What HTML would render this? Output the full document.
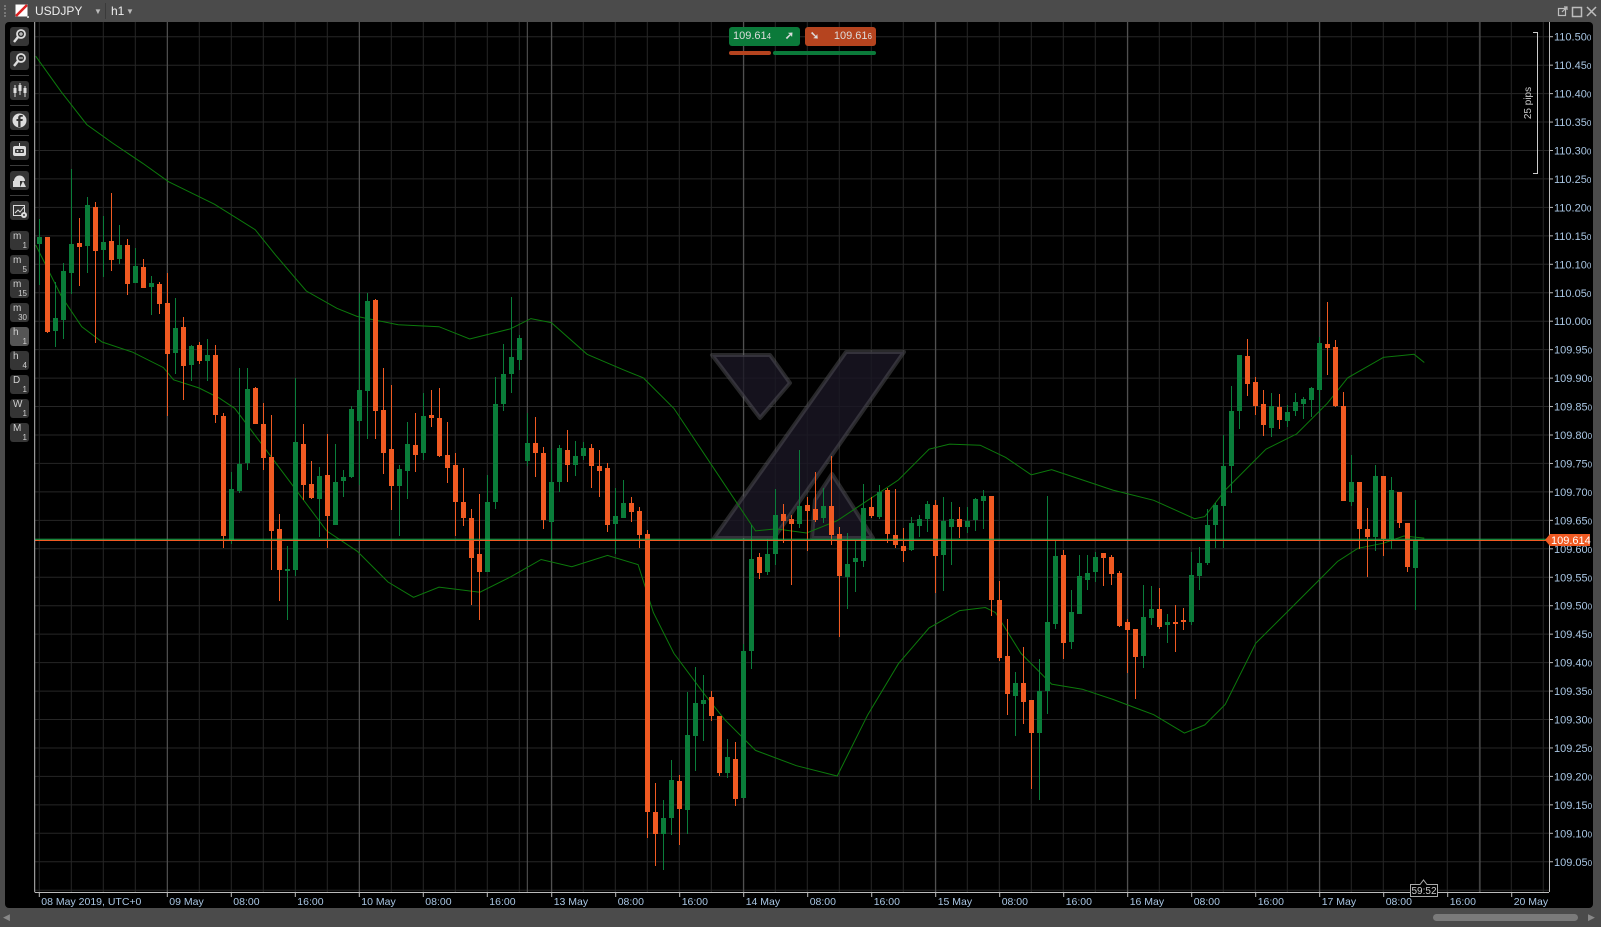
<!DOCTYPE html>
<html><head><meta charset="utf-8">
<style>
html,body{margin:0;padding:0;}
body{width:1601px;height:927px;background:#4b4b4b;position:relative;overflow:hidden;font-family:"Liberation Sans",sans-serif;}
#panel{position:absolute;left:5px;top:22px;width:1588px;height:886px;background:#000;border-radius:4px 4px 4px 4px;}
.btn{position:absolute;left:10px;width:19px;height:19px;background:#353535;border-radius:3px;color:#cfcfcf;}
.sep{position:absolute;left:10px;width:19px;height:1px;background:#3c3c3c;}
.tf .a{position:absolute;left:3px;top:0px;font-size:10px;}
.tf .b{position:absolute;right:2px;bottom:0px;font-size:8px;}
.ttl{position:absolute;color:#eee;font-size:12px;top:4px;}
</style></head><body>
<div style="position:absolute;left:4px;top:5px;width:2px;height:12px;border-left:2px dotted #777;"></div>
<svg style="position:absolute;left:15px;top:4px" width="14" height="14"><rect x="0.5" y="0.5" width="12" height="12" fill="#fff"/><line x1="1" y1="12" x2="12" y2="1" stroke="#d22" stroke-width="2.5"/><rect x="12" y="12" width="2" height="2" fill="#ccc"/></svg>
<div class="ttl" style="left:35px;">USDJPY</div>
<div class="ttl" style="left:94px;font-size:8px;top:7px;color:#bbb">▼</div>
<div style="position:absolute;left:105px;top:3px;width:1px;height:16px;background:#3a3a3a"></div>
<div class="ttl" style="left:111px;">h1</div>
<div class="ttl" style="left:126px;font-size:8px;top:7px;color:#bbb">▼</div>
<svg style="position:absolute;left:1557px;top:5px" width="44" height="14">
<g stroke="#bdbdbd" fill="none" stroke-width="1.2"><rect x="1.5" y="3.5" width="7" height="7"/><path d="M5 7 L10 2 M7 2 H10 V5"/><rect x="15.5" y="2.5" width="9" height="9" stroke-width="1.5"/><path d="M30 2 L39 11 M39 2 L30 11" stroke-width="1.5"/></g></svg>
<div id="panel"></div>
<div class="btn" style="top:27px"><svg width="19" height="19"><circle cx="11" cy="7" r="4" fill="none" stroke="#ddd" stroke-width="1.8"/><path d="M8 10 L4 15" stroke="#ddd" stroke-width="2.4"/><path d="M9 7h4M11 5v4" stroke="#ddd" stroke-width="1"/></svg></div>
<div class="btn" style="top:51px"><svg width="19" height="19"><circle cx="11" cy="7" r="4" fill="none" stroke="#ddd" stroke-width="1.8"/><path d="M8 10 L4 15" stroke="#ddd" stroke-width="2.4"/><path d="M9 7h4" stroke="#ddd" stroke-width="1"/></svg></div>
<div class="sep" style="top:75px"></div>
<div class="btn" style="top:81px"><svg width="19" height="19"><g stroke="#ddd"><path d="M5 4v12M10 2v12M15 5v11"/></g><rect x="3.5" y="7" width="3" height="5" fill="#ddd"/><rect x="8.5" y="4" width="3" height="6" fill="#ddd"/><rect x="13.5" y="7" width="3" height="5" fill="#ddd"/></svg></div>
<div class="sep" style="top:105px"></div>
<div class="btn" style="top:111px"><svg width="19" height="19"><circle cx="9.5" cy="9.5" r="7" fill="#ddd"/><path d="M10.5 16V10h2l.3-2h-2.3V6.8c0-.6.2-1 1-1h1.3V4.1c-.3 0-1-.1-1.8-.1-1.8 0-2.8 1-2.8 2.8V8H6.5v2h1.7v6z" fill="#353535"/></svg></div>
<div class="sep" style="top:135px"></div>
<div class="btn" style="top:141px"><svg width="19" height="19"><rect x="3" y="5" width="13" height="10" rx="2" fill="#ddd"/><rect x="5" y="8" width="9" height="4" rx="1" fill="#353535"/><circle cx="7.5" cy="10" r="1" fill="#ddd"/><circle cx="11.5" cy="10" r="1" fill="#ddd"/><path d="M9.5 2v3" stroke="#ddd"/></svg></div>
<div class="sep" style="top:165px"></div>
<div class="btn" style="top:171px"><svg width="19" height="19"><path d="M4 10 a5.5 5.5 0 0 1 11 0z" fill="#ddd"/><rect x="3" y="10" width="7" height="6" fill="#ddd"/><path d="M10 16 L13 10 L16 16z" fill="#ddd"/></svg></div>
<div class="sep" style="top:195px"></div>
<div class="btn" style="top:201px"><svg width="19" height="19"><g stroke="#ddd" fill="none"><rect x="3.5" y="4.5" width="11" height="10"/><path d="M5 12 L8 9 L10 11 L14 6"/></g><circle cx="14" cy="14" r="3" fill="#ddd"/><circle cx="14" cy="14" r="1" fill="#353535"/></svg></div>
<div class="btn tf" style="top:231px"><span class="a">m</span><span class="b">1</span></div>
<div class="btn tf" style="top:255px"><span class="a">m</span><span class="b">5</span></div>
<div class="btn tf" style="top:279px"><span class="a">m</span><span class="b">15</span></div>
<div class="btn tf" style="top:303px"><span class="a">m</span><span class="b">30</span></div>
<div class="btn tf" style="top:327px;background:#555"><span class="a">h</span><span class="b">1</span></div>
<div class="btn tf" style="top:351px"><span class="a">h</span><span class="b">4</span></div>
<div class="btn tf" style="top:375px"><span class="a">D</span><span class="b">1</span></div>
<div class="btn tf" style="top:399px"><span class="a">W</span><span class="b">1</span></div>
<div class="btn tf" style="top:423px"><span class="a">M</span><span class="b">1</span></div>

<svg id="ch" style="position:absolute;left:0;top:0" width="1601" height="927" font-family="Liberation Sans, sans-serif"></svg>

<div style="position:absolute;left:1433px;top:914px;width:145px;height:7px;background:#7a7a7a;border-radius:4px"></div>
<div style="position:absolute;left:3px;top:912px;color:#888;font-size:9px">◀</div>
<div style="position:absolute;left:1588px;top:912px;color:#888;font-size:9px">▶</div>

<div style="position:absolute;left:729px;top:27px;width:71px;height:19px;background:#0b7a3a;border-radius:3px;color:#ddd;font-size:11px;line-height:19px"><span style="margin-left:4px">109.61</span><span style="font-size:8px">4</span><span style="position:absolute;right:6px;font-weight:bold">➚</span></div>
<div style="position:absolute;left:805px;top:27px;width:71px;height:19px;background:#b5441f;border-radius:3px;color:#ddd;font-size:11px;line-height:19px"><span style="position:absolute;left:5px;font-weight:bold">➘</span><span style="position:absolute;right:4px">109.61<span style="font-size:8px">6</span></span></div>
<div style="position:absolute;left:729px;top:51px;width:42px;height:4px;background:#b5441f;border-radius:2px"></div>
<div style="position:absolute;left:773px;top:51px;width:103px;height:4px;background:#0b7a3a;border-radius:2px"></div>

<script>
var S='';
function L(x1,y1,x2,y2,c,w){S+='<line x1="'+x1+'" y1="'+y1+'" x2="'+x2+'" y2="'+y2+'" stroke="'+c+'" stroke-width="'+(w||1)+'"/>';}
var prices=[];
for(var k=0;k<=30;k++){var y=36.7+28.45*k;if(y<891){L(35,y.toFixed(1),1549,y.toFixed(1),'#262626');if(y<870)prices.push([y,(110.5-0.05*k).toFixed(2)]);}}
for(var x=39.3;x<1549;x+=32){L(x.toFixed(1),22,x.toFixed(1),892,'#262626');}
var bright=[167.3,359.3,527.3,551.7,743.7,935.7,1127.7,1319.7,1480];
bright.forEach(function(x){L(x,22,x,892,'#5a5a5a');});
S+='<g fill="rgba(26,22,36,0.8)" stroke="rgba(100,100,105,0.4)" stroke-width="4" stroke-linejoin="round">'+
'<polygon points="712,355 770,355 790,383 760,418"/>'+
'<polygon points="846,352 904,352 774,538 714,538"/>'+
'<polygon points="832,474 873,538 812,538 815,500"/></g>';
function P(pts,c){S+='<polyline fill="none" stroke="'+c+'" stroke-width="1" points="'+pts.map(function(p){return (p[0]*1.021).toFixed(1)+','+(p[1]*1.021).toFixed(1)}).join(' ')+'"/>';}
P([[35,55],[60,90],[85,122],[110,140],[140,160],[165,178],[210,200],[250,225],[270,250],[300,285],[330,302],[350,310],[390,318],[430,320],[460,332],[500,322],[520,312],[540,316],[575,347],[610,362],[630,370],[660,400],[700,460],[740,520],[760,518],[790,522],[820,510],[850,490],[880,470],[910,440],[930,435],[960,436],[985,448],[1010,465],[1030,460],[1060,470],[1090,480],[1130,490],[1170,508],[1180,506],[1200,480],[1240,440],[1270,425],[1300,395],[1320,370],[1355,350],[1385,347],[1395,355]],'#0c7a0c');
P([[35,240],[60,290],[80,320],[100,335],[130,345],[160,360],[170,372],[195,380],[215,390],[230,400],[260,440],[290,480],[320,520],[350,540],[380,570],[405,585],[430,575],[470,580],[500,565],[530,548],[560,555],[595,544],[625,553],[640,600],[660,640],[690,680],[710,705],[740,735],[780,750],[820,760],[850,700],[880,650],[910,615],[940,598],[965,595],[975,600],[1000,640],[1030,670],[1060,675],[1090,685],[1130,700],[1160,718],[1180,710],[1200,690],[1230,630],[1260,600],[1290,570],[1310,550],[1330,537],[1355,532],[1375,525],[1395,527]],'#0c7a0c');
var C=[[39,'g',237,244,219,285],[47,'o',237,332,237,333],[55,'g',318,331,282,347],[63,'g',271,320,263,339],[71,'g',244,273,169,294],[79,'o',243,247,218,286],[87,'g',205,246,197,273],[95,'o',207,251,202,343],[103,'g',242,250,216,277],[111,'o',241,260,193,271],[119,'g',245,259,225,264],[127,'o',245,284,239,295],[135,'g',266,283,248,283],[143,'o',267,288,259,288],[151,'g',283,287,276,315],[159,'o',284,304,282,314],[167,'o',303,354,273,416],[175,'g',328,353,298,374],[183,'o',327,366,317,400],[191,'g',346,365,345,381],[199,'o',345,361,342,364],[207,'g',355,361,339,381],[215,'o',355,415,345,423],[223,'o',416,536,413,548],[231,'g',489,540,472,544],[239,'g',464,491,368,493],[247,'g',389,463,368,470],[255,'o',388,424,387,424],[263,'o',424,458,403,470],[271,'o',457,531,415,570],[279,'o',529,570,514,601],[287,'g',569,571,546,620],[295,'g',442,570,378,576],[303,'o',444,485,424,500],[311,'o',484,498,461,499],[319,'g',476,499,467,537],[327,'o',475,516,434,548],[335,'g',482,525,444,525],[343,'g',477,481,470,497],[351,'g',409,477,406,478],[359,'g',390,421,293,485],[367,'g',301,391,293,439],[375,'o',300,411,299,439],[383,'o',410,453,368,474],[391,'o',449,486,385,510],[399,'g',469,486,465,536],[407,'g',444,471,422,499],[415,'o',445,455,413,472],[423,'g',416,453,393,460],
[431,'o',415,418,390,427],[439,'o',418,456,388,457],[447,'o',455,468,422,483],[455,'o',465,502,453,536],[463,'o',502,518,468,526],[471,'o',518,558,509,605],[479,'o',554,572,494,620],[487,'g',502,572,475,572],[495,'g',404,502,377,509],[503,'g',374,404,344,411],[511,'g',357,374,297,393],[519,'g',338,360,335,370],[527,'g',443,461,413,466],[535,'o',443,453,417,477],[543,'o',453,520,447,529],[551,'g',482,522,449,550],[559,'g',448,482,445,492],[567,'o',450,465,430,482],[575,'g',456,465,441,476],[583,'g',448,456,442,460],[591,'o',448,466,444,488],[599,'o',466,471,450,497],[607,'o',468,525,463,532],[615,'g',516,524,488,554],[623,'g',503,518,480,518],[631,'o',503,512,497,522],[639,'o',511,535,507,548],[647,'o',534,812,530,838],[655,'o',812,834,783,866],[663,'g',818,834,800,870],[671,'g',780,818,760,835],[679,'o',781,809,775,845],[687,'g',735,810,692,834],[695,'g',703,736,667,771],[703,'g',700,704,675,741],[711,'o',697,716,691,721],[719,'o',716,773,716,776],[727,'g',757,773,739,778],[735,'o',759,799,742,806],[743,'g',651,798,644,798],[751,'g',559,651,525,669],[759,'o',557,573,553,579],[767,'g',554,572,539,575],[775,'g',515,554,489,565],[783,'o',514,521,504,543],[791,'o',519,524,515,585],[799,'g',506,524,450,528],[807,'o',505,511,497,551],[815,'o',509,520,472,522],
[823,'g',506,518,488,523],[831,'o',506,535,456,545],[839,'o',534,576,527,637],[847,'g',564,577,533,609],[855,'g',558,562,540,592],[863,'g',508,561,484,567],[871,'o',507,516,497,518],[879,'g',492,517,485,519],[887,'o',490,534,488,543],[895,'o',535,545,489,548],[903,'o',546,551,528,562],[911,'g',523,550,517,551],[919,'g',519,526,515,537],[927,'g',504,519,501,532],[935,'o',505,556,500,593],[943,'g',521,555,497,591],[951,'g',519,527,502,565],[959,'o',519,527,507,538],[967,'g',521,527,507,533],[975,'g',499,520,498,531],[983,'g',496,501,490,529],[991,'o',496,600,496,616],[999,'o',600,658,581,661],[1007,'o',656,694,619,715],[1015,'g',683,696,672,736],[1023,'o',683,702,647,724],[1031,'o',700,733,700,789],[1039,'g',691,733,659,800],[1047,'g',622,691,496,714],[1055,'g',556,624,541,629],[1063,'o',555,643,550,659],[1071,'g',612,642,590,649],[1079,'g',576,614,555,614],[1087,'g',573,580,555,590],[1095,'g',557,572,552,582],[1103,'o',553,558,553,586],[1111,'o',557,574,555,585],[1119,'o',573,626,571,627],[1127,'o',622,630,619,673],[1135,'o',629,657,629,699],[1143,'g',617,656,585,668],[1151,'g',609,618,586,625],[1159,'o',609,627,588,629],[1167,'g',622,625,614,643],[1175,'o',622,623,605,652],[1183,'o',620,622,608,630],
[1191,'g',575,622,552,625],[1199,'g',563,576,547,590],[1207,'g',525,563,509,565],[1215,'g',505,525,503,548],[1223,'g',466,506,435,548],[1231,'g',411,466,386,493],[1239,'g',355,411,355,429],[1247,'o',356,384,339,396],[1255,'o',382,406,377,415],[1263,'o',404,425,390,436],[1271,'g',406,428,393,437],[1279,'o',407,420,394,429],[1287,'g',412,421,405,427],[1295,'g',402,411,393,416],[1303,'g',399,404,397,419],[1311,'g',388,400,387,417],[1319,'g',343,390,337,413],[1327,'o',344,348,302,375],[1335,'o',347,406,340,407],[1343,'o',406,501,392,501],[1351,'g',482,502,455,506],[1359,'o',482,529,482,549],[1367,'o',529,537,508,577],[1375,'g',476,537,465,551],[1383,'o',476,539,476,556],[1391,'g',490,539,477,549],[1399,'o',492,523,492,528],[1407,'o',523,567,523,572],[1415,'g',540,568,500,610]];
C.forEach(function(c){var col=c[1]=='g'?'#0a7d3a':'#f05a22';L(c[0]+0.5,c[4],c[0]+0.5,c[5],col);var h=Math.max(2,c[3]-c[2]);S+='<rect x="'+(c[0]-2)+'" y="'+c[2]+'" width="5" height="'+h+'" fill="'+col+'"/>';});
L(35,540.5,1549,540.5,'#f05a22');L(35,539.3,1549,539.3,'#22b050');
L(34.7,22,34.7,892,'#bbb');L(34.7,892.5,1549,892.5,'#bbb');L(1549.5,22,1549.5,892,'#bbb');
prices.forEach(function(p){L(1549,p[0],1553,p[0],'#bbb');S+='<text x="1554" y="'+(p[0]+4)+'" font-size="11" fill="#a9c6e3">'+p[1]+'<tspan font-size="8">0</tspan></text>';});
var labs=[[39.3,'08 May 2019, UTC+0'],[167.3,'09 May'],[231.3,'08:00'],[295.3,'16:00'],[359.3,'10 May'],[423.3,'08:00'],[487.3,'16:00'],[551.7,'13 May'],[615.7,'08:00'],[679.7,'16:00'],[743.7,'14 May'],[807.7,'08:00'],[871.7,'16:00'],[935.7,'15 May'],[999.7,'08:00'],[1063.7,'16:00'],[1127.7,'16 May'],[1191.7,'08:00'],[1255.7,'16:00'],[1319.7,'17 May'],[1383.7,'08:00'],[1447.7,'16:00'],[1511.7,'20 May']];
labs.forEach(function(l){L(l[0],892,l[0],897,'#bbb');S+='<text x="'+(l[0]+2)+'" y="905" font-size="10.5" fill="#a9c6e3">'+l[1]+'</text>';});
S+='<polygon points="1545,540 1550,534 1590,534 1590,546 1550,546" fill="#f05a22"/><text x="1551" y="544" font-size="11" fill="#fff">109.614</text>';
S+='<path d="M1533 32.5 H1537.5 V173.5 H1533" fill="none" stroke="#ccc"/><text transform="translate(1531,103) rotate(-90)" text-anchor="middle" font-size="10" fill="#ccc">25 pips</text>';
S+='<path d="M1410.5 884.5 H1420 L1423.5 880 L1427 884.5 H1437.5 V896.5 H1410.5Z" fill="#000" stroke="#aaa"/><text x="1424" y="894" text-anchor="middle" font-size="10" fill="#ccc">59:52</text>';
document.getElementById('ch').innerHTML=S;
</script>
</body></html>
